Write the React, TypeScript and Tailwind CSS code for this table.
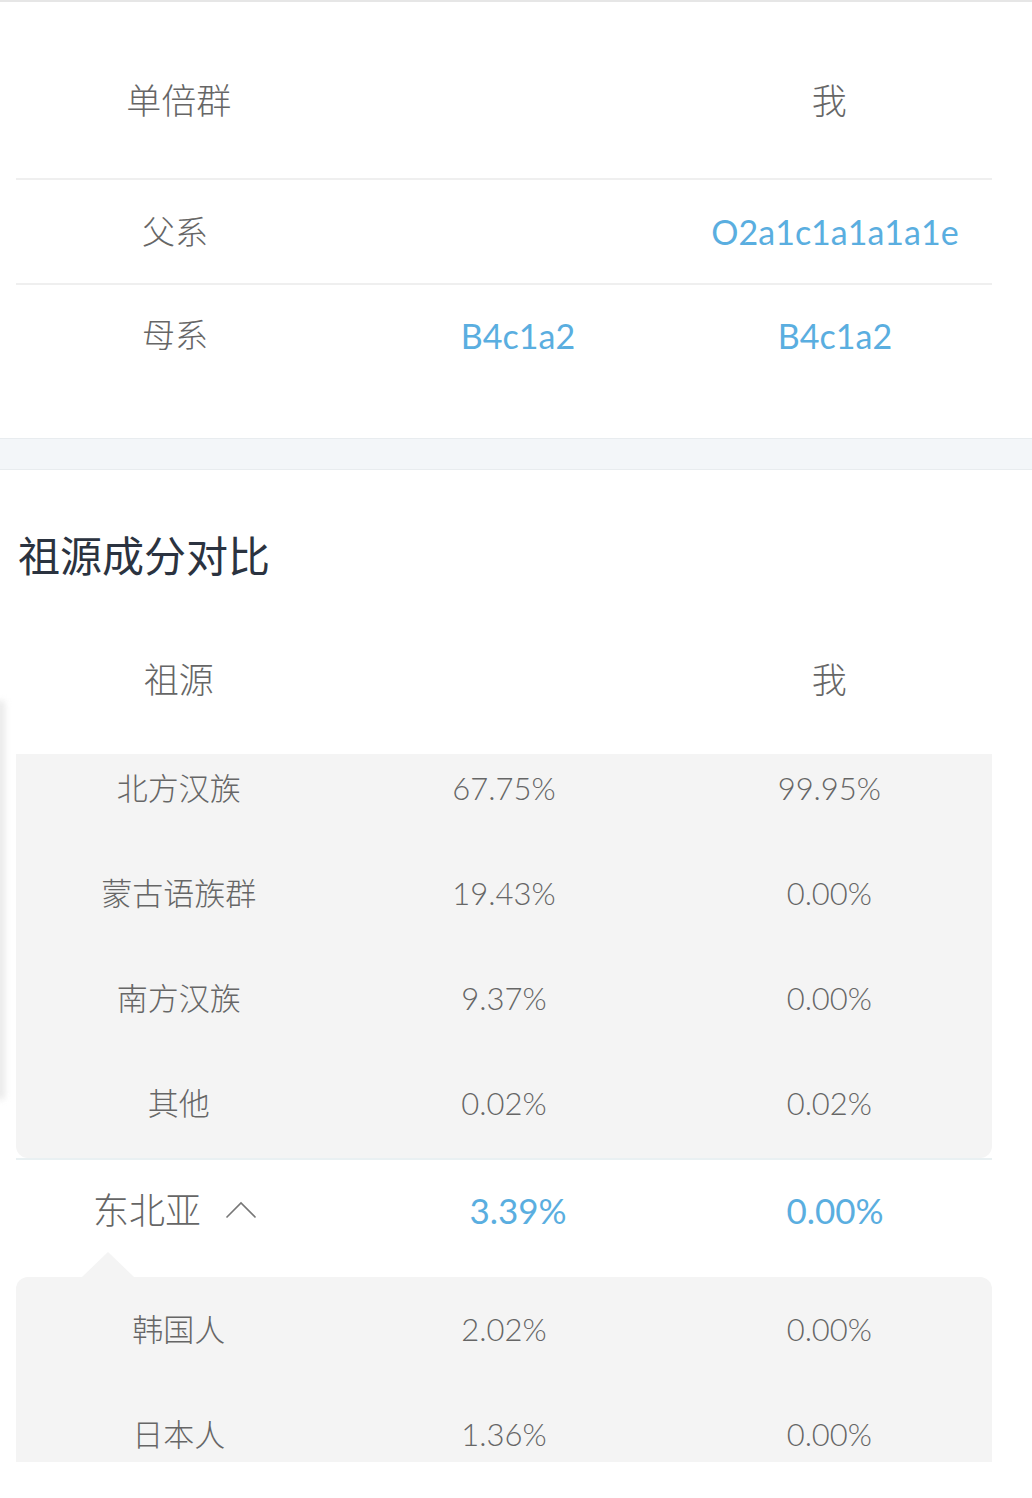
import React from 'react';

// 祖源对比页面
const HAPLO_ROWS = [
  { label: '父系', other: '', me: 'O2a1c1a1a1a1e' },
  { label: '母系', other: 'B4c1a2', me: 'B4c1a2' },
];

const ANCESTRY = [
  { label: '北方汉族', other: '67.75%', me: '99.95%' },
  { label: '蒙古语族群', other: '19.43%', me: '0.00%' },
  { label: '南方汉族', other: '9.37%', me: '0.00%' },
  { label: '其他', other: '0.02%', me: '0.02%' },
];

const NE_ASIA = [
  { label: '韩国人', other: '2.02%', me: '0.00%' },
  { label: '日本人', other: '1.36%', me: '0.00%' },
];

const App: React.FC = () => {
  return (
    <div className="relative w-[1032px] h-[1498px] overflow-hidden bg-white font-['Lato','Noto_Sans_CJK_SC',sans-serif] font-light text-[#666]">
      {/* left edge shadow */}
      <div className="absolute -left-[4px] top-[700px] w-[9px] h-[400px] rounded-full bg-[#e4e4e4] blur-[3px] opacity-80" />

      <div className="border-t-2 border-[#e6e6e6]" />

      {/* 单倍群 */}
      <div className="ml-4 mr-10">
        <div className="grid grid-cols-3 h-[176px] pt-5 items-center text-center text-[35px]">
          <div>单倍群</div>
          <div />
          <div>我</div>
        </div>
        {HAPLO_ROWS.map((row, i) => (
          <div key={row.label}>
            <div className="h-[2px] bg-[#efefef]" />
            <div className={`grid grid-cols-[318px_368px_266px] items-center text-center ${i === 0 ? 'h-[103px]' : 'h-[100px]'}`}>
              <div className="text-[33px]">{row.label}</div>
              <div className="text-[34px] font-normal text-[#5aaee0]">{row.other}</div>
              <div className="text-[34px] font-normal text-[#5aaee0]">{row.me}</div>
            </div>
          </div>
        ))}
        <div className="h-[53px]" />
      </div>

      <div className="h-[32px] bg-[#f3f6f9] border-y border-[#e8ecef]" />

      {/* 祖源成分对比 */}
      <div className="pl-[18px] pt-[58px] h-[114px] text-[42px] leading-[56px] font-normal text-[#2b3340]">祖源成分对比</div>

      <div className="ml-4 mr-10">
        <div className="grid grid-cols-3 h-[170px] pt-5 items-center text-center text-[35px]">
          <div>祖源</div>
          <div />
          <div>我</div>
        </div>

        <div className="h-[404px] overflow-hidden bg-[#f4f4f4] rounded-b-xl">
          {ANCESTRY.map(row => (
            <div key={row.label} className="grid grid-cols-3 h-[105px] pt-[15px] text-center text-[31px] leading-[38px]">
              <div>{row.label}</div>
              <div>{row.other}</div>
              <div>{row.me}</div>
            </div>
          ))}
        </div>

        <div className="h-[2px] bg-[#e9f0f2]" />

        <div className="grid grid-cols-[318px_368px_266px] h-[92px] pt-2 items-center text-center">
          <div className="flex items-center justify-center gap-6">
            <span className="text-[36px]">东北亚</span>
            <svg width="32" height="18" viewBox="0 0 32 18" fill="none">
              <polyline points="1.5,16.5 16,2 30.5,16.5" stroke="#777" strokeWidth="1.6" />
            </svg>
          </div>
          <div className="text-[35px] font-normal text-[#5aaee0]">3.39%</div>
          <div className="text-[35px] font-normal text-[#5aaee0]">0.00%</div>
        </div>

        <div className="ml-[66px] w-0 h-0 border-l-[26px] border-r-[26px] border-b-[25px] border-l-transparent border-r-transparent border-b-[#f4f4f4]" />

        <div className="h-[185px] overflow-hidden bg-[#f4f4f4] rounded-t-xl">
          {NE_ASIA.map(row => (
            <div key={row.label} className="grid grid-cols-3 h-[105px] items-center text-center text-[31px]">
              <div>{row.label}</div>
              <div>{row.other}</div>
              <div>{row.me}</div>
            </div>
          ))}
        </div>
      </div>
    </div>
  );
};

export default App;
